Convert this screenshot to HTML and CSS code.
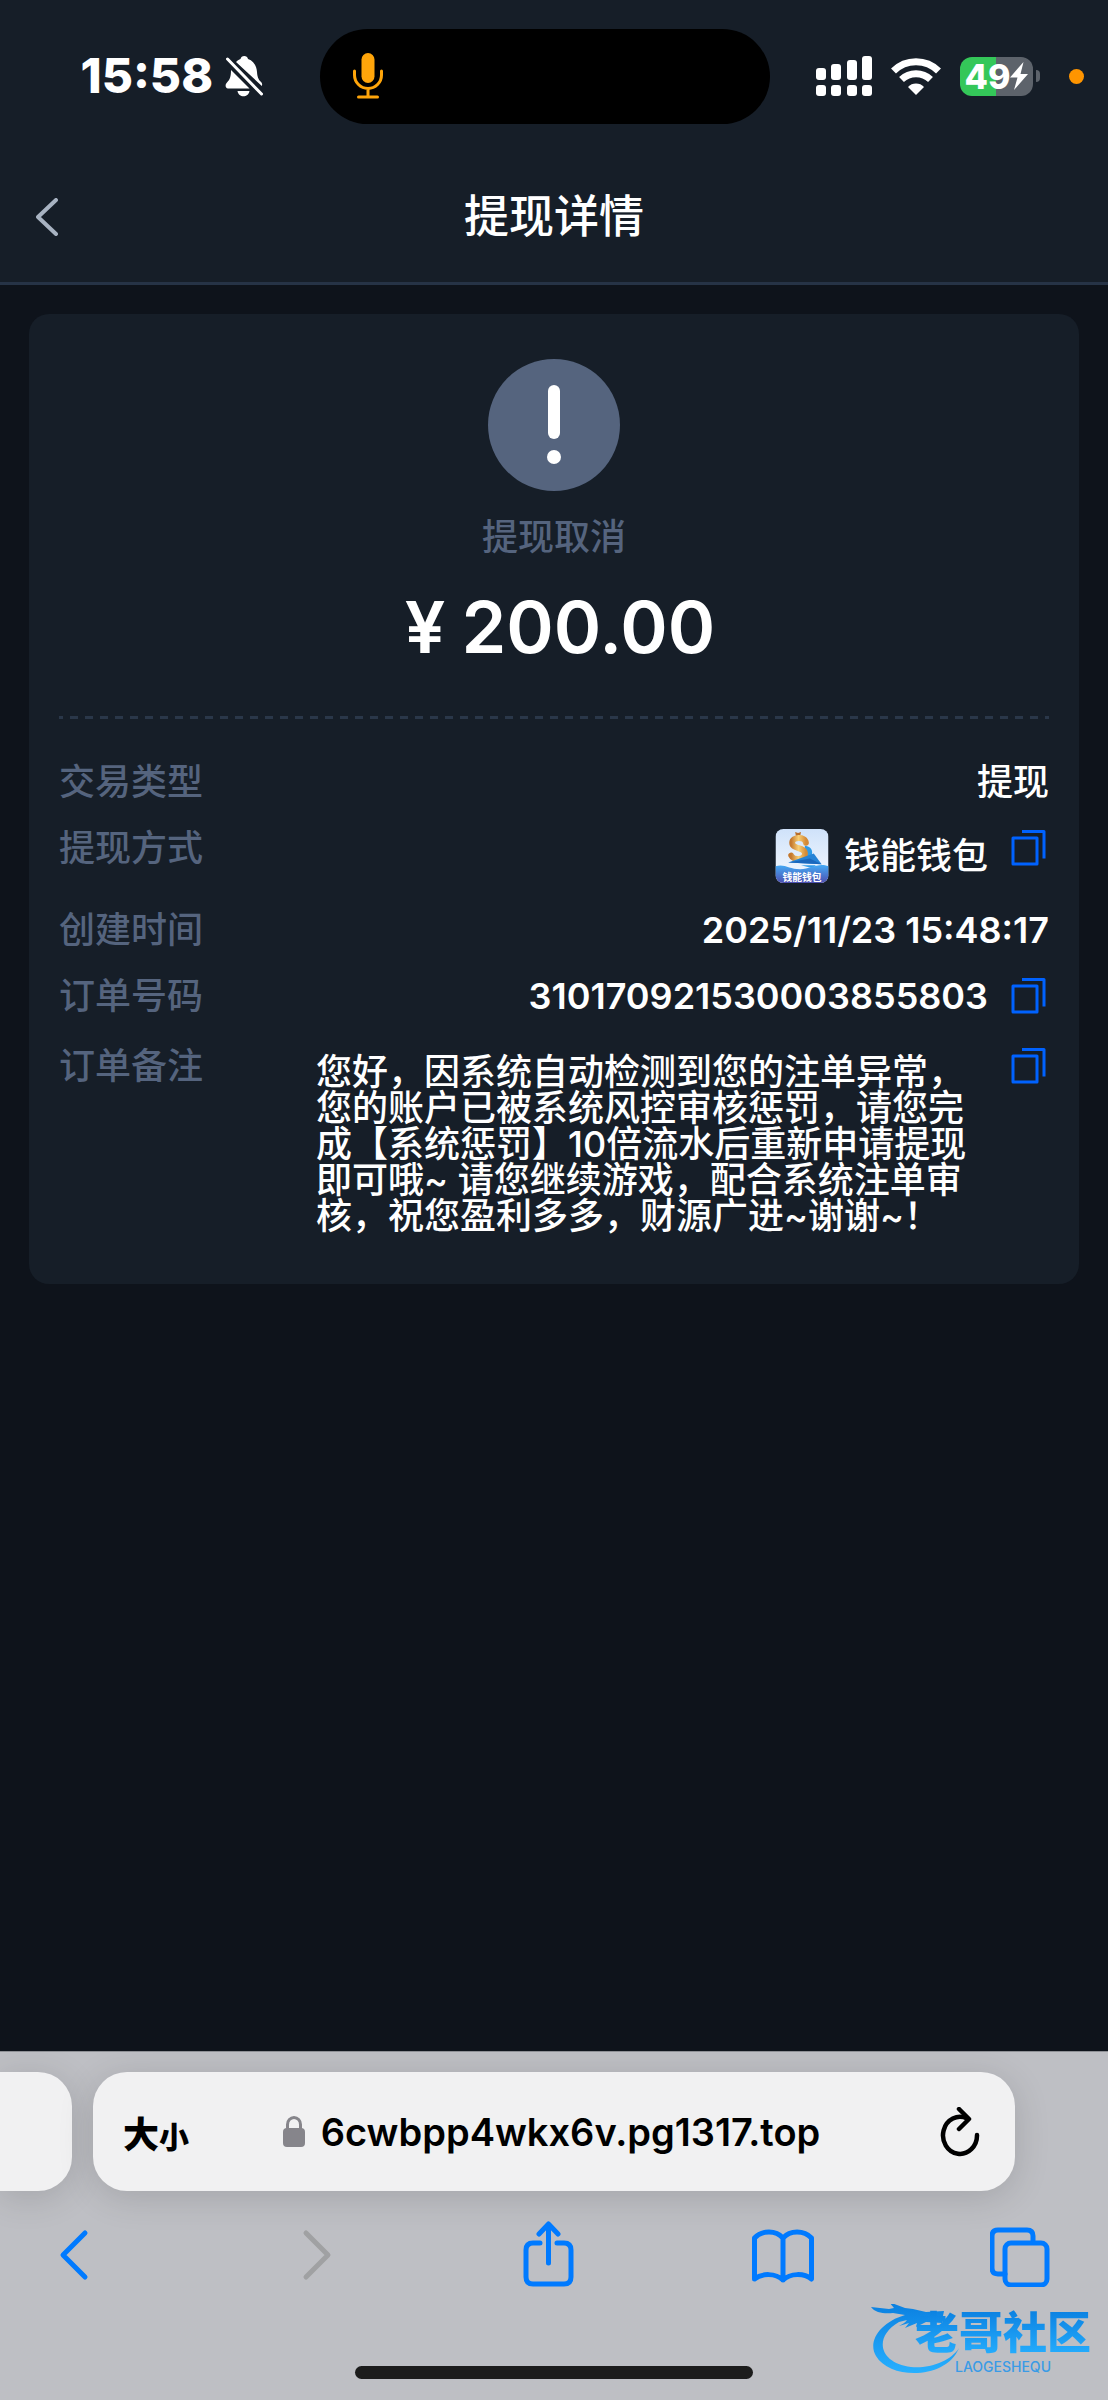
FILE: index.html
```html
<!DOCTYPE html>
<html lang="zh-CN">
<head>
    <meta charset="utf-8">
    <meta name="viewport" content="width=device-width, initial-scale=1">
    <title>提现详情</title>
    <link rel="stylesheet" href="styles.css">
</head>
<body>

<svg class="sprite" width="0" height="0">
    <symbol id="icon-copy" viewBox="0 0 38 38">
        <path d="M2 9h24v26h-24z M11 2.500h22v27" fill="none" stroke="currentColor" stroke-width="3" stroke-linejoin="round"/>
    </symbol>
</svg>

<header class="top">
    <div class="status">
        <div class="status-left">
            <span class="time">15:58</span>
            <svg width="38" height="42" viewBox="0 0 38 42">
                <path d="M11 7c2-2 3-2.500 4.500-3 .5-4 7-4 7.500 0 6 2 8.500 7 9 13 .3 6 2 8 4.500 10.500.8 1 .8 2.500.3 3.500zM6 15l18.500 18.500H3c-3-.5-3-4-1-6 3-3 4-6 4-12.500zM12.500 36h12c-1 7-11 7-12 0z" fill="#fff"/>
                <path d="M2.500 4l34 35" stroke="#161e28" stroke-width="7"/>
                <path d="M2.500 4l34 35" stroke="#fff" stroke-width="3" stroke-linecap="round"/>
            </svg>
        </div>
        <div class="island">
            <svg width="30" height="46" viewBox="0 0 30 46">
                <rect x="8.500" y="0" width="13" height="30" rx="6.500" fill="#ffa50a"/>
                <path d="M1.500 18v4a13.500 13.500 0 0 0 27 0v-4M15 36v8M5.500 44h19" fill="none" stroke="#ffa50a" stroke-width="3" stroke-linecap="round"/>
            </svg>
        </div>
        <div class="status-right">
            <svg class="signal" width="56" height="40" viewBox="0 0 56 40" fill="#fff">
                <rect x="0" y="12" width="10" height="12" rx="3"/>
                <rect x="15" y="8" width="10" height="16" rx="3"/>
                <rect x="31" y="4" width="10" height="20" rx="3"/>
                <rect x="46" y="0" width="10" height="24" rx="3"/>
                <rect x="0" y="29" width="10" height="11" rx="3"/>
                <rect x="15" y="29" width="10" height="11" rx="3"/>
                <rect x="31" y="29" width="10" height="11" rx="3"/>
                <rect x="46" y="29" width="10" height="11" rx="3"/>
            </svg>
            <svg class="wifi" width="50" height="38" viewBox="0 0 50 38">
                <path d="M2.500 14a32 32 0 0 1 45 0M10.500 22.500a21 21 0 0 1 29 0" fill="none" stroke="#fff" stroke-width="7"/>
                <path d="M25 38l-8-8a11 11 0 0 1 16 0z" fill="#fff"/>
            </svg>
            <div class="battery">
                <span>49</span>
                <svg width="18" height="28" viewBox="0 0 18 28"><path d="M13.500 0L0 15.500h7.500L4 28 18 12h-7.500z" fill="#fff"/></svg>
            </div>
            <i class="nub"></i>
            <i class="rec"></i>
        </div>
    </div>
    <div class="navbar">
        <button class="back" type="button" aria-label="返回">
            <svg width="22" height="38" viewBox="0 0 22 38"><path d="M20 2L2 19l18 17" fill="none" stroke="#a8b3c2" stroke-width="4" stroke-linecap="round" stroke-linejoin="round"/></svg>
        </button>
        <h1>提现详情</h1>
    </div>
</header>

<main>
    <section class="card">
        <div class="summary">
            <svg width="132" height="132" viewBox="0 0 132 132">
                <circle cx="66" cy="66" r="66" fill="#55647e"/>
                <rect x="60" y="26" width="12" height="54" rx="6" fill="#fff"/>
                <circle cx="66" cy="98" r="7" fill="#fff"/>
            </svg>
            <p class="state">提现取消</p>
            <p class="amount"><span>¥</span>200.00</p>
        </div>
        <div class="divider"></div>
        <dl class="details">
            <div class="row">
                <dt>交易类型</dt>
                <dd>提现</dd>
            </div>
            <div class="row">
                <dt>提现方式</dt>
                <dd class="wallet">
                    <svg width="54" height="54" viewBox="0 0 54 55">
                        <defs>
                            <linearGradient id="sky" x1="0" y1="0" x2="0" y2="1">
                                <stop offset="0" stop-color="#cfe2fa"/>
                                <stop offset="1" stop-color="#f8fbff"/>
                            </linearGradient>
                            <linearGradient id="sea" x1="0" y1="0" x2="0" y2="1">
                                <stop offset="0" stop-color="#45aaf5"/>
                                <stop offset="1" stop-color="#4d4fb0"/>
                            </linearGradient>
                            <linearGradient id="gold" x1="0" y1="0" x2="1" y2="0">
                                <stop offset="0" stop-color="#c4782e"/>
                                <stop offset=".5" stop-color="#f8cf75"/>
                                <stop offset="1" stop-color="#d48a36"/>
                            </linearGradient>
                            <clipPath id="tile"><rect width="54" height="55" rx="8"/></clipPath>
                        </defs>
                        <g clip-path="url(#tile)">
                            <rect width="54" height="55" fill="url(#sky)"/>
                            <path d="M30 17c7 1 8 5 7 10l-9 6z" fill="#2d9ae6"/>
                            <path d="M20 3l3 1 3-1-1 5h-4z" fill="#b96e2a"/>
                            <path d="M31 14c-1-7-14-6-14 0 0 7 13 4 13 11 0 7-12 7-14 2" fill="none" stroke="url(#gold)" stroke-width="6" stroke-linecap="round"/>
                            <path d="M13 34l26-9 8 11z" fill="#2683d6"/>
                            <path d="M13 34l22-4 12 6z" fill="#1b68bd"/>
                            <path d="M26 37h15l-3 3z" fill="#319ce8"/>
                            <path d="M0 38c9-3 14 3 25 3s18-7 29-3v17H0z" fill="url(#sea)"/>
                            <text x="27" y="53" text-anchor="middle" class="tile-name">钱能钱包</text>
                        </g>
                    </svg>
                    <span>钱能钱包</span>
                </dd>
                <dd class="copy"><button type="button" aria-label="复制提现方式"><svg width="38" height="38"><use href="#icon-copy"/></svg></button></dd>
            </div>
            <div class="row">
                <dt>创建时间</dt>
                <dd class="num">2025/11/23 15:48:17</dd>
            </div>
            <div class="row">
                <dt>订单号码</dt>
                <dd class="num">310170921530003855803</dd>
                <dd class="copy"><button type="button" aria-label="复制订单号码"><svg width="38" height="38"><use href="#icon-copy"/></svg></button></dd>
            </div>
            <div class="row row-note">
                <dt>订单备注</dt>
                <dd class="note">您好，因系统自动检测到您的注单异常，您的账户已被系统风控审核惩罚，请您完成【系统惩罚】10倍流水后重新申请提现即可哦~ 请您继续游戏，配合系统注单审核，祝您盈利多多，财源广进~谢谢~！</dd>
                <dd class="copy"><button type="button" aria-label="复制订单备注"><svg width="38" height="38"><use href="#icon-copy"/></svg></button></dd>
            </div>
        </dl>
    </section>
</main>

<footer class="browser">
    <div class="tabs">
        <div class="tab-prev"></div>
        <div class="address">
            <button class="text-size" type="button">大<small>小</small></button>
            <a class="url" href="#">
                <svg width="22" height="31" viewBox="0 0 22 31">
                    <rect x="0" y="12" width="22" height="19" rx="4" fill="#86858b"/>
                    <path d="M4.500 14V8.500a6.500 7 0 0 1 13 0V14" fill="none" stroke="#86858b" stroke-width="3"/>
                </svg>
                <span>6cwbpp4wkx6v.pg1317.top</span>
            </a>
            <button class="reload" type="button" aria-label="刷新">
                <svg width="40" height="50" viewBox="0 0 40 50" fill="none" stroke="#000" stroke-width="4.500" stroke-linecap="round" stroke-linejoin="round">
                    <path d="M37 28A17 18.500 0 1 1 27 11.500"/>
                    <path d="M19 2l10 10-10 10"/>
                </svg>
            </button>
        </div>
    </div>
    <nav class="toolbar">
        <button type="button" aria-label="后退">
            <svg width="60" height="66" viewBox="0 0 60 66"><path d="M41 12L19 34l22 22" class="line"/></svg>
        </button>
        <button type="button" aria-label="前进" disabled>
            <svg width="60" height="66" viewBox="0 0 60 66"><path d="M26 12l22 22-22 22" class="line"/></svg>
        </button>
        <button type="button" aria-label="分享">
            <svg width="60" height="66" viewBox="0 0 60 66"><path d="M25 22h-7q-7 0-7 7v27q0 7 7 7h31q7 0 7-7V29q0-7-7-7h-7M33.500 42V4M24 13L33.500 3l9.500 10" class="line"/></svg>
        </button>
        <button type="button" aria-label="书签">
            <svg width="64" height="66" viewBox="0 0 64 66"><path d="M32 17c-7-8-21-8-28.500 0v41c7.500-6 21-6 28.500 1 7.500-7 21-7 28.500-1V17c-7.500-8-21.500-8-28.500 0zv42" class="line"/></svg>
        </button>
        <button type="button" aria-label="标签页">
            <svg width="60" height="66" viewBox="0 0 60 66"><path d="M43 20v-5q0-6-6-6H8q-6 0-6 6v32q0 6 6 6h7" class="line"/><rect x="15" y="22" width="42" height="42" rx="6" class="line"/></svg>
        </button>
    </nav>
    <div class="home"></div>
    <div class="watermark">
        <svg width="90" height="72" viewBox="0 0 90 72">
            <defs>
                <linearGradient id="dragon" x1="0" y1="0" x2="0" y2="1">
                    <stop offset="0" stop-color="#0a7fe0"/>
                    <stop offset="1" stop-color="#27b0ff"/>
                </linearGradient>
            </defs>
            <path d="M34 11C10 18-4 37 5 52c14 24 70 24 83-8-8 13-30 21-48 19C8 59 2 33 28 18l8-2c-2 3-5 4-8 6l10-3-4 5 12-5-1 4 10-5 16 1 1-4-12-2 12-1 1-5-18 1-13-3-8-1-16-6 5 6-5 1L0 3c4 6 14 7 22 6z" fill="url(#dragon)"/>
        </svg>
        <div class="watermark-name">
            <strong>老哥社区</strong>
            <span>LAOGESHEQU</span>
        </div>
    </div>
</footer>

</body>
</html>
```
FILE: styles.css
```css
* {
    box-sizing: border-box;
}

body {
    margin: 0;
    min-height: 100vh;
    display: flex;
    flex-direction: column;
    background: #0e131b;
    color: #fff;
    font-family: Inter, "Noto Sans CJK SC", sans-serif;
    font-size: 36px;
    font-weight: 500;
}

h1, p, dl, dd {
    margin: 0;
}

button {
    padding: 0;
    border: none;
    background: none;
    color: inherit;
    font: inherit;
    cursor: pointer;
}

svg {
    display: block;
    flex-shrink: 0;
}

.sprite {
    position: absolute;
}

/* status bar + title */
.top {
    background: #161e28;
    border-bottom: 3px solid #263346;
}

.status {
    display: flex;
    align-items: center;
    height: 152px;
}

.status-left {
    display: flex;
    align-items: center;
    justify-content: flex-end;
    gap: 12px;
    width: 320px;
    padding-right: 57px;
}

.time {
    font-size: 48px;
    font-weight: 800;
    line-height: 48px;
}

.island {
    display: flex;
    align-items: center;
    width: 450px;
    height: 95px;
    padding-left: 33px;
    border-radius: 48px;
    background: #000;
}

.status-right {
    display: flex;
    align-items: center;
    flex: 1;
    padding-left: 46px;
}

.wifi {
    margin: 0 19px;
}

.battery {
    display: flex;
    align-items: center;
    justify-content: center;
    width: 73px;
    height: 39px;
    border-radius: 12px;
    background: linear-gradient(to right, #34c759 50%, #5d636b 50%);
    font-size: 34px;
    font-weight: 800;
    line-height: 39px;
}

.nub {
    width: 4px;
    height: 12px;
    margin-left: 3px;
    border-radius: 0 4px 4px 0;
    background: #5d636b;
}

.rec {
    width: 15px;
    height: 15px;
    margin-left: 29px;
    border-radius: 50%;
    background: #ff9500;
}

.navbar {
    display: grid;
    grid-template-columns: 1fr auto 1fr;
    align-items: center;
    height: 130px;
    padding: 0 36px;
}

.back {
    justify-self: start;
}

.navbar h1 {
    font-size: 45px;
    font-weight: 500;
    line-height: 60px;
}

/* order card */
main {
    flex: 1;
    padding: 29px;
}

.card {
    padding: 45px 30px 50px;
    border-radius: 20px;
    background: #161e28;
}

.summary {
    display: flex;
    flex-direction: column;
    align-items: center;
}

.state {
    margin-top: 28px;
    line-height: 36px;
    color: #55647e;
}

.amount {
    display: flex;
    gap: 16px;
    margin-top: 36px;
    padding-left: 12px;
    font-size: 72px;
    font-weight: 600;
    line-height: 72px;
}

.divider {
    height: 3px;
    margin: 53px 0 44px;
    background: repeating-linear-gradient(to right, #2a3749 0 4px, transparent 4px 11px, #2a3749 11px 15px);
}

.details {
    display: flex;
    flex-direction: column;
    gap: 28px;
}

.row {
    display: flex;
    align-items: flex-start;
    line-height: 38px;
}

.row-note {
    margin-top: 4px;
}

.row dt {
    color: #55647e;
    margin-right: auto;
}

.num {
    font-weight: 600;
}

.wallet {
    display: flex;
    align-items: center;
    gap: 15px;
}

.tile-name {
    font-size: 10px;
    font-weight: 700;
    fill: #fff;
}

.copy {
    margin-left: 23px;
    color: #0062ff;
}

.copy button {
    display: block;
}

.row .note {
    width: 672px;
    padding-top: 7px;
    line-height: 36px;
}

/* safari chrome */
.browser {
    position: relative;
    border-top: 1px solid #8e9095;
    background: #bebfc4;
    color: #000;
    overflow: hidden;
}

.tabs {
    display: flex;
    gap: 21px;
    padding: 20px 93px 0 0;
}

.tab-prev,
.address {
    height: 119px;
    background: #f1f1f2;
    box-shadow: 0 6px 36px rgba(0, 0, 0, 0.14);
}

.tab-prev {
    width: 72px;
    border-radius: 0 34px 34px 0;
}

.address {
    flex: 1;
    display: grid;
    grid-template-columns: 1fr auto 1fr;
    align-items: center;
    padding: 0 35px 0 30px;
    border-radius: 34px;
}

.text-size {
    justify-self: start;
    font-weight: 800;
}

.text-size small {
    font-size: 30px;
}

.url {
    display: flex;
    align-items: center;
    gap: 16px;
    color: #000;
    font-size: 38px;
    font-weight: 600;
    text-decoration: none;
}

.reload {
    justify-self: end;
}

.toolbar {
    display: flex;
    justify-content: space-between;
    padding: 30px 58px 0 44px;
    color: #007aff;
}

.toolbar button:disabled {
    color: #a0a1a3;
}

.line {
    fill: none;
    stroke: currentColor;
    stroke-width: 5;
    stroke-linecap: round;
    stroke-linejoin: round;
}

.home {
    width: 36%;
    height: 13px;
    margin: 79px auto 21px;
    border-radius: 7px;
    background: #1c1c1c;
}

.watermark {
    position: absolute;
    right: 17px;
    bottom: 24px;
    display: flex;
    align-items: flex-end;
}

.watermark-name {
    display: flex;
    flex-direction: column;
    align-items: center;
    margin-left: -46px;
}

.watermark-name strong {
    font-size: 44px;
    font-weight: 900;
    line-height: 50px;
    color: transparent;
    background: linear-gradient(to bottom, #0a7fe0, #27b0ff);
    -webkit-background-clip: text;
    background-clip: text;
}

.watermark-name span {
    font-size: 14px;
    line-height: 18px;
    color: #3a9be6;
}
```
